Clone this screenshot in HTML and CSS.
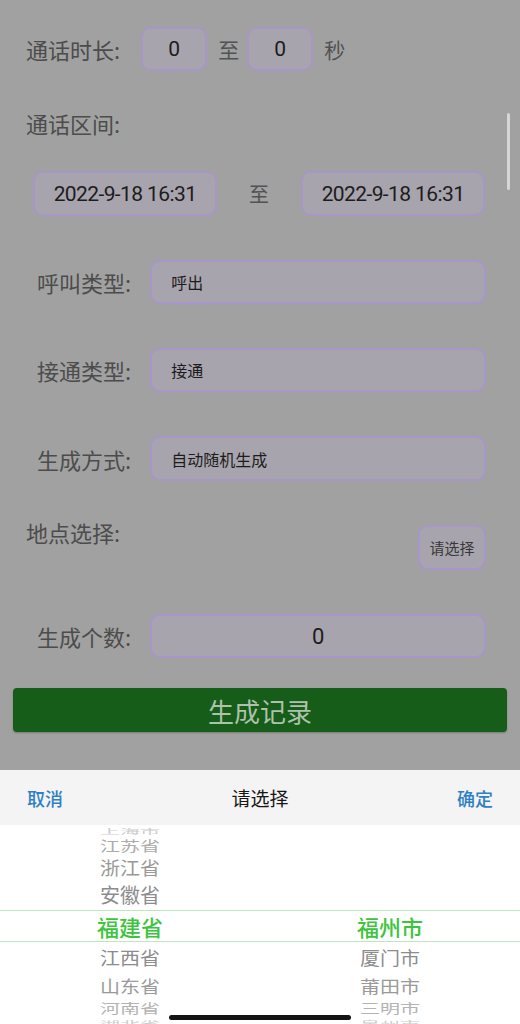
FILE: index.html
```html
<!DOCTYPE html>
<html lang="zh-CN">
<head>
  <meta charset="UTF-8">
  <title>生成通话记录</title>
  <link rel="stylesheet" href="styles.css">
</head>
<body>
  <div class="page">
    <div class="row row-dur">
      <span class="label">通话时长:</span>
      <div class="box box-num">0</div>
      <span class="word">至</span>
      <div class="box box-num">0</div>
      <span class="word">秒</span>
    </div>

    <div class="row row-title">
      <span class="label">通话区间:</span>
    </div>

    <div class="row row-range">
      <div class="box box-date">2022-9-18 16:31</div>
      <span class="word word-to">至</span>
      <div class="box box-date">2022-9-18 16:31</div>
    </div>

    <div class="field">
      <span class="label">呼叫类型:</span>
      <div class="box box-text">呼出</div>
    </div>

    <div class="field">
      <span class="label">接通类型:</span>
      <div class="box box-text">接通</div>
    </div>

    <div class="field field-tall">
      <span class="label">生成方式:</span>
      <div class="box box-text">自动随机生成</div>
    </div>

    <div class="row row-place">
      <span class="label">地点选择:</span>
      <button class="pick">请选择</button>
    </div>

    <div class="field">
      <span class="label">生成个数:</span>
      <div class="box box-count">0</div>
    </div>

    <button class="submit">生成记录</button>

    <div class="scrollbar"></div>
  </div>

  <!-- 地区选择弹层 -->
  <div class="sheet">
    <div class="sheet-head">
      <span class="act">取消</span>
      <span class="sheet-title">请选择</span>
      <span class="act">确定</span>
    </div>
    <div class="wheel">
      <div class="col">
        <div class="item r4"><span>上海市</span></div>
        <div class="item r3"><span>江苏省</span></div>
        <div class="item r2"><span>浙江省</span></div>
        <div class="item r1"><span>安徽省</span></div>
        <div class="item cur"><span>福建省</span></div>
        <div class="item d1"><span>江西省</span></div>
        <div class="item d2"><span>山东省</span></div>
        <div class="item d3"><span>河南省</span></div>
        <div class="item d4"><span>湖北省</span></div>
      </div>
      <div class="col">
        <div class="item r4"></div>
        <div class="item r3"></div>
        <div class="item r2"></div>
        <div class="item r1"></div>
        <div class="item cur"><span>福州市</span></div>
        <div class="item d1"><span>厦门市</span></div>
        <div class="item d2"><span>莆田市</span></div>
        <div class="item d3"><span>三明市</span></div>
        <div class="item d4"><span>泉州市</span></div>
      </div>
      <div class="mark"></div>
    </div>
    <div class="home-bar"></div>
  </div>
</body>
</html>
```

FILE: styles.css
```css
* {
  box-sizing: border-box;
  margin: 0;
  padding: 0;
}

body {
  width: 520px;
  height: 1024px;
  overflow: hidden;
  display: flex;
  flex-direction: column;
  font-family: "Noto Sans CJK SC", sans-serif;
}

/* 表单区域（被遮罩压暗） */
.page {
  position: relative;
  height: 770px;
  background: #a1a1a1;
  display: flex;
  flex-direction: column;
}

.row {
  display: flex;
  align-items: center;
}

.label {
  font-size: 22px;
  line-height: 28px;
  color: #4c4c4c;
  white-space: nowrap;
}

.word {
  font-size: 21px;
  color: #525252;
}

.box {
  height: 44px;
  border: 2px solid #a895c9;
  border-radius: 10px;
  background: #a8a4ad;
  color: #1c1c1c;
  display: flex;
  align-items: center;
  justify-content: center;
}

.row-dur {
  margin-top: 27px;
  padding-left: 26px;
}

.row-dur .label {
  margin-right: 21px;
}

.box-num {
  width: 66px;
  font-family: Roboto, "Noto Sans CJK SC", sans-serif;
  font-size: 21px;
}

.row-dur .word {
  margin: 0 8px 0 11px;
}

.row-title {
  margin-top: 38px;
  padding-left: 26px;
}

.row-range {
  margin-top: 34px;
  padding-left: 33px;
  height: 45px;
}

.box-date {
  width: 184px;
  height: 45px;
  font-family: Roboto, "Noto Sans CJK SC", sans-serif;
  font-size: 21px;
  letter-spacing: -0.6px;
}

.word-to {
  margin: 0 32px;
  font-size: 20px;
}

.field {
  display: flex;
  align-items: center;
  margin-top: 44px;
  padding: 0 34px 0 37px;
}

.field .label {
  margin-right: 19px;
}

.box-text {
  flex: 1;
  justify-content: flex-start;
  padding-left: 19px;
  font-size: 16px;
}

.field-tall .box {
  height: 45px;
}

.box-count {
  flex: 1;
  font-family: Roboto, "Noto Sans CJK SC", sans-serif;
  font-size: 22px;
}

.row-place {
  margin-top: 37px;
  padding: 0 34px 0 26px;
  align-items: flex-start;
  justify-content: space-between;
}

.pick {
  margin-top: 7px;
  width: 68px;
  height: 45px;
  border: 2px solid #a895c9;
  border-radius: 10px;
  background: #a8a4ad;
  color: #383838;
  font-family: inherit;
  font-size: 15px;
}

.submit {
  margin: 30px 13px 0;
  height: 44px;
  border: none;
  border-radius: 4px;
  background: #165d1a;
  box-shadow: 0 1px 2px rgba(0, 0, 0, 0.25);
  color: #aec2ab;
  font-family: inherit;
  font-size: 26px;
}

.scrollbar {
  position: absolute;
  left: 507px;
  top: 113px;
  width: 3px;
  height: 77px;
  border-radius: 2px;
  background: #d6d6d6;
}

/* 底部选择器 */
.sheet {
  position: relative;
  height: 254px;
  background: #fff;
}

.sheet-head {
  height: 55px;
  background: #f4f4f4;
  display: flex;
  align-items: center;
  justify-content: space-between;
  padding: 0 27px;
}

.act {
  font-size: 18px;
  font-weight: 500;
  color: #2f7fc6;
}

.sheet-title {
  font-size: 19px;
  color: #161616;
}

.wheel {
  position: relative;
  height: 199px;
  overflow: hidden;
  display: grid;
  grid-template-columns: 1fr 1fr;
}

.item {
  display: flex;
  align-items: center;
  justify-content: center;
  font-size: 20px;
  color: #8c8c8c;
  overflow: visible;
}

.item span {
  display: block;
  line-height: 1;
}

.r4 { height: 11px; color: #cdcdcd; }
.r4 span { transform: scaleY(0.35); }
.r3 { height: 20px; color: #ababab; }
.r3 span { transform: scaleY(0.68); }
.r2 { height: 24px; color: #999; }
.r2 span { transform: scaleY(0.92); }
.r1 { height: 30px; }

.cur {
  height: 32px;
  font-size: 22px;
  font-weight: 500;
  color: #3cc43c;
}

.d1 { height: 32px; }
.d1 span { transform: scaleY(0.9); }
.d2 { height: 24px; color: #9a9a9a; }
.d2 span { transform: scaleY(0.85); }
.d3 { height: 20px; color: #b3b3b3; }
.d3 span { transform: scaleY(0.65); }
.d4 { height: 12px; color: #cdcdcd; }
.d4 span { transform: scaleY(0.4); }

.mark {
  position: absolute;
  left: 0;
  right: 0;
  top: 85px;
  height: 32px;
  border-top: 1px solid #bfe6bf;
  border-bottom: 1px solid #bfe6bf;
  pointer-events: none;
}

.home-bar {
  position: absolute;
  left: 169px;
  bottom: 4px;
  width: 182px;
  height: 5px;
  border-radius: 3px;
  background: #141414;
}
```
